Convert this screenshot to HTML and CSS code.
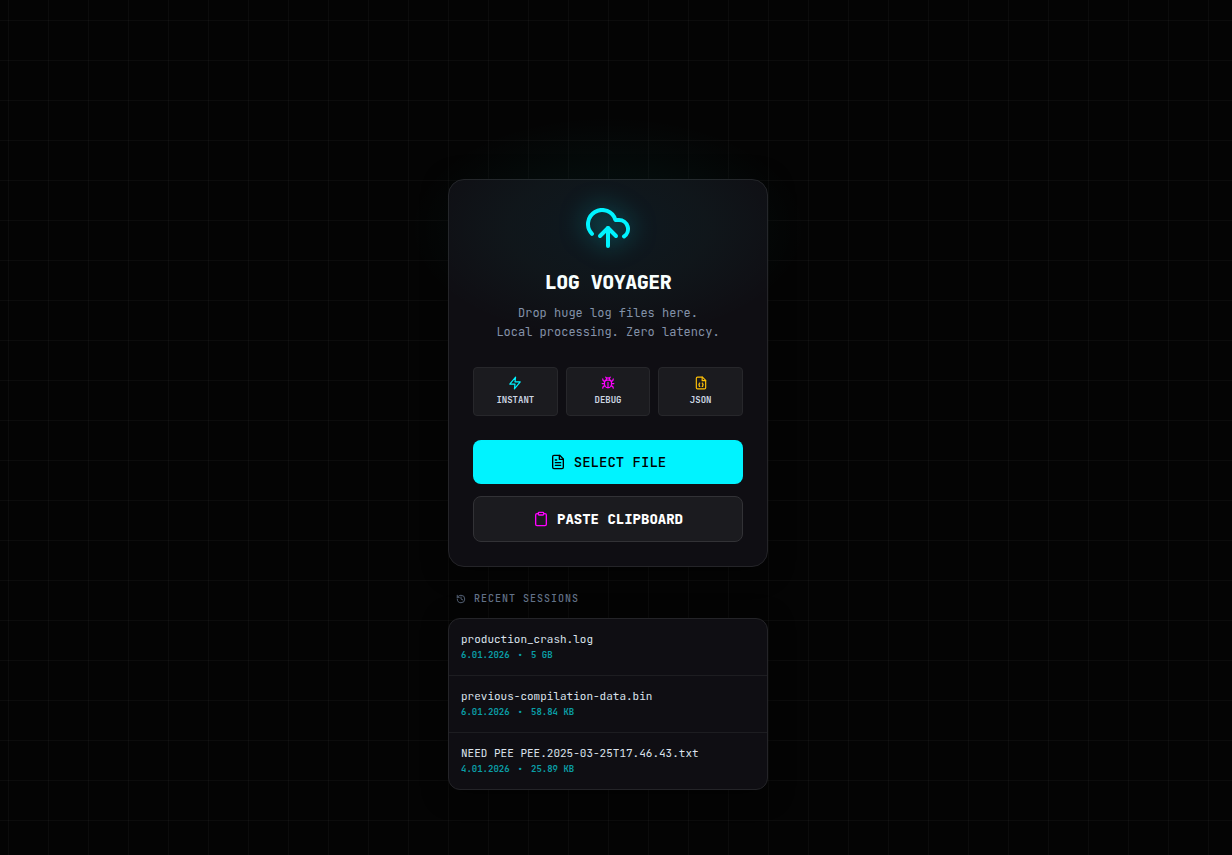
FILE: index.html
```html
<!DOCTYPE html>
<html lang="en">
<head>
<meta charset="utf-8">
<meta name="viewport" content="width=device-width, initial-scale=1">
<title>Log Voyager</title>
<link rel="stylesheet" href="styles.css">
</head>
<body>
<main class="shell">
  <section class="panel drop">
    <svg class="icon cloud" viewBox="0 0 24 24" aria-hidden="true"><path d="M4 14.899A7 7 0 1 1 15.71 8h1.79a4.5 4.5 0 0 1 2.5 8.242"/><path d="M12 12v9"/><path d="m16 16-4-4-4 4"/></svg>
    <h1 class="title">LOG VOYAGER</h1>
    <p class="lead">Drop huge log files here.<br>Local processing. Zero latency.</p>
    <ul class="features">
      <li class="feature">
        <svg class="icon icon-sm cyan" viewBox="0 0 24 24" aria-hidden="true"><polygon points="13 2 3 14 12 14 11 22 21 10 12 10 13 2"/></svg>
        <span>INSTANT</span>
      </li>
      <li class="feature">
        <svg class="icon icon-sm magenta" viewBox="0 0 24 24" aria-hidden="true"><path d="m8 2 1.88 1.88"/><path d="M14.12 3.88 16 2"/><path d="M9 7.13v-1a3.003 3.003 0 1 1 6 0v1"/><path d="M12 20c-3.3 0-6-2.7-6-6v-3a4 4 0 0 1 4-4h4a4 4 0 0 1 4 4v3c0 3.3-2.7 6-6 6"/><path d="M12 20v-9"/><path d="M6.53 9C4.6 8.8 3 7.1 3 5"/><path d="M6 13H2"/><path d="M3 21c0-2.1 1.7-3.9 3.8-4"/><path d="M20.97 5c0 2.1-1.6 3.8-3.5 4"/><path d="M22 13h-4"/><path d="M17.2 17c2.1.1 3.8 1.9 3.8 4"/></svg>
        <span>DEBUG</span>
      </li>
      <li class="feature">
        <svg class="icon icon-sm amber" viewBox="0 0 24 24" aria-hidden="true"><path d="M14.5 2H6a2 2 0 0 0-2 2v16a2 2 0 0 0 2 2h12a2 2 0 0 0 2-2V7.5L14.5 2z"/><path d="M14 2v6h6"/><path d="M10 12a1 1 0 0 0-1 1v1a1 1 0 0 1-1 1 1 1 0 0 1 1 1v1a1 1 0 0 0 1 1"/><path d="M14 18a1 1 0 0 0 1-1v-1a1 1 0 0 1 1-1 1 1 0 0 1-1-1v-1a1 1 0 0 0-1-1"/></svg>
        <span>JSON</span>
      </li>
    </ul>
    <div class="actions">
      <button class="btn btn-primary" type="button">
        <svg class="icon icon-md" viewBox="0 0 24 24" aria-hidden="true"><path d="M14.5 2H6a2 2 0 0 0-2 2v16a2 2 0 0 0 2 2h12a2 2 0 0 0 2-2V7.5L14.5 2z"/><path d="M14 2v6h6"/><path d="M10 9H8"/><path d="M16 13H8"/><path d="M16 17H8"/></svg>
        SELECT FILE
      </button>
      <button class="btn btn-secondary" type="button">
        <svg class="icon icon-md magenta" viewBox="0 0 24 24" aria-hidden="true"><rect width="8" height="4" x="8" y="2" rx="1"/><path d="M16 4h2a2 2 0 0 1 2 2v14a2 2 0 0 1-2 2H6a2 2 0 0 1-2-2V6a2 2 0 0 1 2-2h2"/></svg>
        PASTE CLIPBOARD
      </button>
    </div>
  </section>

  <section class="recent">
    <h2 class="recent-title">
      <svg class="icon icon-xs" viewBox="0 0 24 24" aria-hidden="true"><path d="M3 12a9 9 0 1 0 9-9 9.75 9.75 0 0 0-6.74 2.74L3 8"/><path d="M3 3v5h5"/><path d="M12 7v5l4 2"/></svg>
      RECENT SESSIONS
    </h2>
    <ul class="panel sessions">
      <li class="session"><button class="session-btn" type="button"><span class="name">production_crash.log</span><span class="meta"><span>6.01.2026</span><span>•</span><span>5 GB</span></span></button></li>
      <li class="session"><button class="session-btn" type="button"><span class="name">previous-compilation-data.bin</span><span class="meta"><span>6.01.2026</span><span>•</span><span>58.84 KB</span></span></button></li>
      <li class="session"><button class="session-btn" type="button"><span class="name">NEED PEE PEE.2025-03-25T17.46.43.txt</span><span class="meta"><span>4.01.2026</span><span>•</span><span>25.89 KB</span></span></button></li>
    </ul>
  </section>
</main>
</body>
</html>
```
FILE: styles.css
```css
:root {
  --cyan: #00f3ff;
  --magenta: #ff00ff;
  --amber: #ffc107;
  --mono: "JetBrains Mono", "DejaVu Sans Mono", monospace;
}

* { box-sizing: border-box; }

body {
  margin: 0;
  min-height: 100vh;
  padding: 114px 16px 0 0;
  display: flex;
  align-items: center;
  justify-content: center;
  background-color: #040404;
  background-image:
    linear-gradient(rgba(255, 255, 255, 0.03) 1px, transparent 1px),
    linear-gradient(90deg, rgba(255, 255, 255, 0.03) 1px, transparent 1px);
  background-size: 40px 40px;
  background-position: 8px 20px;
  color: #fff;
  font-family: var(--mono);
}

h1, h2, p, ul { margin: 0; padding: 0; }
ul { list-style: none; }
button { font-family: inherit; cursor: pointer; }

.shell {
  width: 100%;
  max-width: 320px;
  display: flex;
  flex-direction: column;
  gap: 24px;
}

.panel {
  border: 1px solid #242428;
  background: #0f0e13;
  box-shadow: 0 4px 24px rgba(0, 0, 0, 0.5);
}

.drop {
  position: relative;
  padding: 24px;
  border-radius: 16px;
  display: flex;
  flex-direction: column;
  align-items: center;
}

.drop::before {
  content: "";
  position: absolute;
  inset: -64px -40px auto;
  height: 224px;
  background: radial-gradient(closest-side, rgba(0, 200, 240, 0.06), rgba(40, 243, 230, 0.035) 50%, transparent);
  pointer-events: none;
}

.icon {
  flex: none;
  fill: none;
  stroke: currentColor;
  stroke-width: 2;
  stroke-linecap: round;
  stroke-linejoin: round;
}
.icon-xs { width: 10px; height: 10px; }
.icon-sm { width: 14px; height: 14px; }
.icon-md { width: 16px; height: 16px; }
.cyan { color: var(--cyan); }
.magenta { color: var(--magenta); }
.amber { color: var(--amber); }

.cloud {
  width: 48px;
  height: 48px;
  margin-bottom: 16px;
  color: var(--cyan);
  filter: drop-shadow(0 0 12px rgba(0, 243, 255, 0.5));
}

.title {
  margin-bottom: 8px;
  font-size: 20px;
  line-height: 28px;
  font-weight: 800;
  letter-spacing: -0.025em;
}

.lead {
  margin-bottom: 25px;
  color: #8491a8;
  font-size: 12px;
  line-height: 19px;
  text-align: center;
}

.features {
  width: 100%;
  margin-bottom: 24px;
  display: grid;
  grid-template-columns: repeat(3, 1fr);
  gap: 8px;
}

.feature {
  padding: 8px;
  display: flex;
  flex-direction: column;
  align-items: center;
  gap: 4px;
  border: 1px solid #27272b;
  border-radius: 4px;
  background: #1b1b1f;
  color: #cbd5e1;
  font-size: 9px;
  line-height: 13px;
  font-weight: 700;
}

.actions {
  width: 100%;
  display: flex;
  flex-direction: column;
  gap: 12px;
}

.btn {
  width: 100%;
  padding: 12px;
  display: flex;
  align-items: center;
  justify-content: center;
  gap: 8px;
  border: 0;
  border-radius: 8px;
  font-size: 14px;
  line-height: 20px;
  font-weight: 500;
}
.btn-primary { background: var(--cyan); color: #000; }
.btn-secondary {
  border: 1px solid #323236;
  background: #1b1b1f;
  color: #fff;
  font-weight: 800;
}

.recent {
  display: flex;
  flex-direction: column;
  gap: 12px;
}

.recent-title {
  padding: 0 8px;
  display: flex;
  align-items: center;
  gap: 8px;
  color: #64748b;
  font-size: 10px;
  line-height: 15px;
  font-weight: 500;
  letter-spacing: 1px;
}

.sessions {
  border-radius: 12px;
  overflow: hidden;
}

.session + .session { border-top: 1px solid #1d1d21; }

.session-btn {
  width: 100%;
  padding: 12px 12px 13px;
  display: flex;
  flex-direction: column;
  border: 0;
  background: transparent;
  text-align: left;
}

.name {
  color: #dbe2ec;
  font-size: 11px;
  line-height: 17px;
}

.meta {
  display: flex;
  gap: 8px;
  color: #0a9ea6;
  font-size: 9px;
  line-height: 14px;
  font-weight: 600;
}
```
